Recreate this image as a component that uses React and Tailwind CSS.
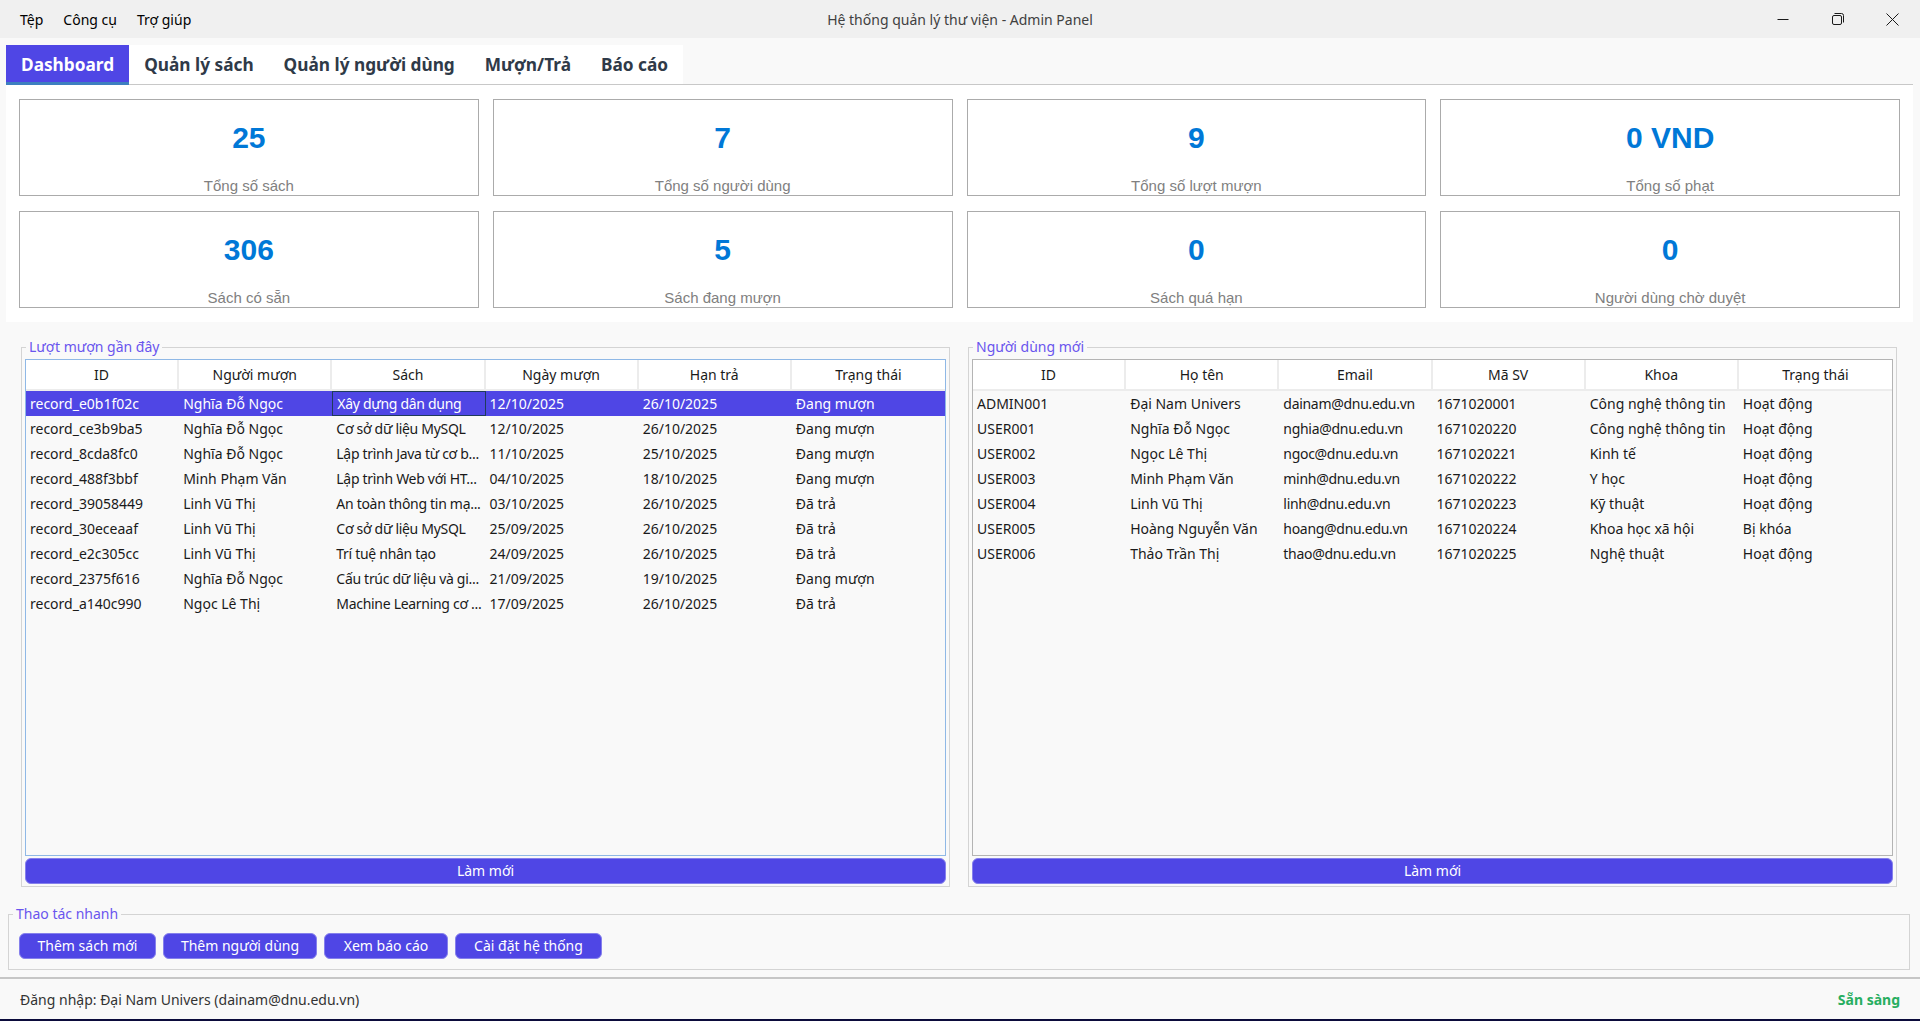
import React from 'react'

const UI = { fontFamily: '"Noto Sans", "Open Sans", sans-serif' }
const ARIAL = { fontFamily: '"Liberation Sans", Arial, sans-serif' }

const STATS = [
  { value: '25', label: 'Tổng số sách' },
  { value: '7', label: 'Tổng số người dùng' },
  { value: '9', label: 'Tổng số lượt mượn' },
  { value: '0 VND', label: 'Tổng số phạt' },
  { value: '306', label: 'Sách có sẵn' },
  { value: '5', label: 'Sách đang mượn' },
  { value: '0', label: 'Sách quá hạn' },
  { value: '0', label: 'Người dùng chờ duyệt' },
]

const BORROW_COLS = ['ID', 'Người mượn', 'Sách', 'Ngày mượn', 'Hạn trả', 'Trạng thái']
const BORROWS = [
  ['record_e0b1f02c', 'Nghĩa Đỗ Ngọc', 'Xây dựng dân dụng', '12/10/2025', '26/10/2025', 'Đang mượn'],
  ['record_ce3b9ba5', 'Nghĩa Đỗ Ngọc', 'Cơ sở dữ liệu MySQL', '12/10/2025', '26/10/2025', 'Đang mượn'],
  ['record_8cda8fc0', 'Nghĩa Đỗ Ngọc', 'Lập trình Java từ cơ b...', '11/10/2025', '25/10/2025', 'Đang mượn'],
  ['record_488f3bbf', 'Minh Phạm Văn', 'Lập trình Web với HT...', '04/10/2025', '18/10/2025', 'Đang mượn'],
  ['record_39058449', 'Linh Vũ Thị', 'An toàn thông tin mạ...', '03/10/2025', '26/10/2025', 'Đã trả'],
  ['record_30eceaaf', 'Linh Vũ Thị', 'Cơ sở dữ liệu MySQL', '25/09/2025', '26/10/2025', 'Đã trả'],
  ['record_e2c305cc', 'Linh Vũ Thị', 'Trí tuệ nhân tạo', '24/09/2025', '26/10/2025', 'Đã trả'],
  ['record_2375f616', 'Nghĩa Đỗ Ngọc', 'Cấu trúc dữ liệu và gi...', '21/09/2025', '19/10/2025', 'Đang mượn'],
  ['record_a140c990', 'Ngọc Lê Thị', 'Machine Learning cơ ...', '17/09/2025', '26/10/2025', 'Đã trả'],
]

const USER_COLS = ['ID', 'Họ tên', 'Email', 'Mã SV', 'Khoa', 'Trạng thái']
const USERS = [
  ['ADMIN001', 'Đại Nam Univers', 'dainam@dnu.edu.vn', '1671020001', 'Công nghệ thông tin', 'Hoạt động'],
  ['USER001', 'Nghĩa Đỗ Ngọc', 'nghia@dnu.edu.vn', '1671020220', 'Công nghệ thông tin', 'Hoạt động'],
  ['USER002', 'Ngọc Lê Thị', 'ngoc@dnu.edu.vn', '1671020221', 'Kinh tế', 'Hoạt động'],
  ['USER003', 'Minh Phạm Văn', 'minh@dnu.edu.vn', '1671020222', 'Y học', 'Hoạt động'],
  ['USER004', 'Linh Vũ Thị', 'linh@dnu.edu.vn', '1671020223', 'Kỹ thuật', 'Hoạt động'],
  ['USER005', 'Hoàng Nguyễn Văn', 'hoang@dnu.edu.vn', '1671020224', 'Khoa học xã hội', 'Bị khóa'],
  ['USER006', 'Thảo Trần Thị', 'thao@dnu.edu.vn', '1671020225', 'Nghệ thuật', 'Hoạt động'],
]

const TABS = ['Dashboard', 'Quản lý sách', 'Quản lý người dùng', 'Mượn/Trả', 'Báo cáo']

/* bảng dữ liệu kiểu QTableWidget */
function DataTable({ columns, rows, selected = -1, focusCol = -1, borderClass }) {
  return (
    <div className={`flex-1 min-h-0 flex flex-col border bg-[#f9f9f9] overflow-hidden ${borderClass}`}>
      <div className="grid grid-cols-6 h-[31px] shrink-0 bg-white border-b-2 border-[#ececec]">
        {columns.map((c, i) => (
          <div key={c} className={`flex items-center justify-center text-[14px] text-[#1a1a1a] ${i < 5 ? 'border-r-2 border-[#ececec]' : ''}`}>
            {c}
          </div>
        ))}
      </div>
      {rows.map((r, ri) => (
        <div key={r[0]} className={`grid grid-cols-6 h-[25px] shrink-0 text-[14px] ${ri === selected ? 'bg-[#4f46e5] text-white' : 'text-[#1a1a1a]'}`}>
          {r.map((cell, ci) => (
            <div
              key={ci}
              className={`flex items-center whitespace-nowrap overflow-hidden pl-[4px] ${ci === 2 ? 'tracking-[-0.3px]' : ''} ${ri === selected && ci === focusCol ? 'border border-[#1f3b5c]' : ''}`}
            >
              {cell}
            </div>
          ))}
        </div>
      ))}
    </div>
  )
}

function GroupBox({ title, children, className = '' }) {
  return (
    <div className={`relative border border-[#d4d4d4] ${className}`}>
      <span className="absolute -top-[11px] left-[4px] px-[3px] leading-[20px] text-[14px] text-[#6a55ee] bg-[#f9f9f9]">
        {title}
      </span>
      {children}
    </div>
  )
}

function PrimaryButton({ children, className = '' }) {
  return (
    <button className={`h-[26px] rounded-[6px] bg-[#4f46e5] border border-[#8580ec] text-white text-[14px] leading-none ${className}`}>
      {children}
    </button>
  )
}

export default function App() {
  return (
    <div style={UI} className="w-[1920px] h-[1021px] flex flex-col bg-[#f9f9f9] overflow-hidden text-[#1a1a1a]">

      {/* THANH TIÊU ĐỀ + MENU */}
      <div className="h-[38px] shrink-0 bg-[#f0f0f0] grid grid-cols-[1fr_auto_1fr] items-center">
        <div className="flex items-center gap-5 pl-[20px] text-[14px] text-black">
          <span>Tệp</span>
          <span>Công cụ</span>
          <span>Trợ giúp</span>
        </div>
        <div className="text-[14px] text-[#404040]">Hệ thống quản lý thư viện - Admin Panel</div>
        <div className="flex justify-end h-full">
          <div className="w-[55px] flex items-center justify-center">
            <svg width="12" height="12" viewBox="0 0 12 12"><path d="M0.5 6.5h11" stroke="#1a1a1a" strokeWidth="1" /></svg>
          </div>
          <div className="w-[55px] flex items-center justify-center">
            <svg width="12" height="12" viewBox="0 0 12 12" fill="none" stroke="#1a1a1a" strokeWidth="1">
              <rect x="0.5" y="2.5" width="9" height="9" rx="1.5" />
              <path d="M2.5 0.5h7a2 2 0 0 1 2 2v7" />
            </svg>
          </div>
          <div className="w-[55px] flex items-center justify-center">
            <svg width="13" height="13" viewBox="0 0 13 13"><path d="M0.5 0.5l12 12M12.5 0.5l-12 12" stroke="#1a1a1a" strokeWidth="1" /></svg>
          </div>
        </div>
      </div>

      {/* TABS */}
      <div className="h-[47px] shrink-0 ml-[6px] mr-[7px] pt-[7px] flex border-b border-[#c8c8c8]">
        <div className="flex bg-white">
          {TABS.map((t, i) => (
            <div
              key={t}
              className={`h-[40px] px-[15px] flex items-center text-[17.25px] font-bold ${i === 0 ? 'bg-[#4f46e5] text-white border-b-[3px] border-[#3d7fc0] pt-[3px]' : 'text-[#2f3a48]'}`}
            >
              {t}
            </div>
          ))}
        </div>
      </div>

      {/* THẺ THỐNG KÊ */}
      <div className="h-[237px] shrink-0 ml-[6px] mr-[7px] bg-white px-[13px] pt-[14px]">
        <div className="grid grid-cols-4 gap-x-[14px] gap-y-[15px]">
          {STATS.map(s => (
            <div key={s.label} style={ARIAL} className="h-[97px] border border-[#ababab] bg-white flex flex-col items-center">
              <div className="mt-[20px] leading-[36px] text-[30px] font-bold text-[#0078d7]">{s.value}</div>
              <div className="mt-auto mb-0 leading-[18px] text-[15px] text-[#808080]">{s.label}</div>
            </div>
          ))}
        </div>
      </div>

      {/* HAI BẢNG */}
      <div className="flex-1 min-h-0 flex gap-[18px] pt-[25px] pl-[21px] pr-[23px]">
        <GroupBox title="Lượt mượn gần đây" className="flex-1 flex flex-col px-[3px] pt-[11px] pb-[2px]">
          <DataTable columns={BORROW_COLS} rows={BORROWS} selected={0} focusCol={2} borderClass="border-[#8fb8e6]" />
          <PrimaryButton className="mt-[2px] w-full">Làm mới</PrimaryButton>
        </GroupBox>
        <GroupBox title="Người dùng mới" className="flex-1 flex flex-col px-[3px] pt-[11px] pb-[2px]">
          <DataTable columns={USER_COLS} rows={USERS} borderClass="border-[#b4b4b4]" />
          <PrimaryButton className="mt-[2px] w-full">Làm mới</PrimaryButton>
        </GroupBox>
      </div>

      {/* THAO TÁC NHANH */}
      <div className="shrink-0 pt-[27px] pl-[8px] pr-[10px]">
        <GroupBox title="Thao tác nhanh" className="flex gap-[7px] pl-[10px] pt-[18px] pb-[10px]">
          <PrimaryButton className="w-[137px] rounded-[5px]">Thêm sách mới</PrimaryButton>
          <PrimaryButton className="w-[154px] rounded-[5px]">Thêm người dùng</PrimaryButton>
          <PrimaryButton className="w-[124px] rounded-[5px]">Xem báo cáo</PrimaryButton>
          <PrimaryButton className="w-[147px] rounded-[5px]">Cài đặt hệ thống</PrimaryButton>
        </GroupBox>
      </div>

      {/* THANH TRẠNG THÁI */}
      <div className="h-[42px] shrink-0 mt-[7px] border-t-2 border-[#c6c6c6] flex items-center justify-between pl-[20px] pr-[20px] text-[14px]">
        <span className="text-[#333333]">Đăng nhập: Đại Nam Univers (dainam@dnu.edu.vn)</span>
        <span className="font-bold text-[#27ae60]">Sẵn sàng</span>
      </div>
      <div className="h-[2px] shrink-0 bg-[#0b0b3b]" />
    </div>
  )
}
